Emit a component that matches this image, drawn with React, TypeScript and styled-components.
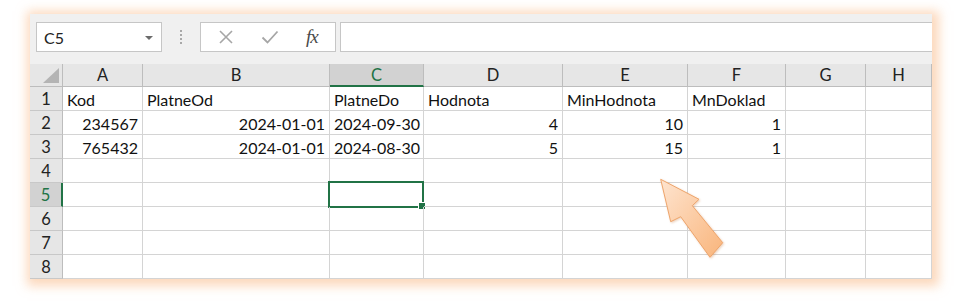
import styled, { createGlobalStyle } from "styled-components";

const GlobalStyle = createGlobalStyle`
  body {
    margin: 0;
    background: #ffffff;
    font-family: Lato, "Open Sans", Arial, sans-serif;
  }
`;

const Frame = styled.div`
  padding: 14px 0 0 30px;
  height: 302px;
  box-sizing: border-box;
`;

const Panel = styled.div`
  position: relative;
  width: 902px;
  background: #ffffff;
  box-shadow: 2px 2px 10px 5px rgba(250, 185, 135, 0.55);
`;

const Toolbar = styled.div`
  height: 50px;
  box-sizing: border-box;
  padding: 8px 0 12px 6px;
  display: flex;
  align-items: stretch;
  background: #f0f0f0;
`;

const NameBox = styled.div`
  width: 126px;
  box-sizing: border-box;
  background: #ffffff;
  border: 1px solid #c6c6c6;
  display: flex;
  align-items: center;
  justify-content: space-between;
  padding: 0 8px 0 7px;
  font-size: 16px;
  color: #222;
`;

const DropCaret = styled.span`
  width: 0;
  height: 0;
  border-left: 4px solid transparent;
  border-right: 4px solid transparent;
  border-top: 4px solid #6b6b6b;
  margin-top: 2px;
`;

const Grip = styled.div`
  width: 38px;
  display: flex;
  flex-direction: column;
  align-items: center;
  justify-content: center;
  gap: 2px;
`;

const GripDot = styled.span`
  width: 2px;
  height: 2px;
  background: #a8a8a8;
`;

const FxGroup = styled.div`
  width: 136px;
  box-sizing: border-box;
  background: #ffffff;
  border: 1px solid #c6c6c6;
  display: flex;
  align-items: center;
  justify-content: space-around;
  padding: 0 4px;
`;

const FxLabel = styled.span`
  font-family: "Liberation Serif", "DejaVu Serif", serif;
  font-style: italic;
  font-size: 19px;
  color: #4a4a4a;
  letter-spacing: -1px;
`;

const FormulaInput = styled.div`
  flex: 1;
  margin-left: 4px;
  background: #ffffff;
  border: 1px solid #c6c6c6;
  border-right: none;
`;

const Sheet = styled.div`
  display: grid;
  grid-template-columns: 33px 80px 187px 94px 139px 125px 98px 80px 66px;
  grid-template-rows: 23px repeat(8, 24px);
`;

const Corner = styled.div`
  background: #e6e6e6;
  border-right: 1px solid #bdbdbd;
  border-bottom: 1px solid #bdbdbd;
  box-sizing: border-box;
  display: flex;
  align-items: flex-end;
  justify-content: flex-end;
  padding: 0 3px 3px 0;
`;

const SelectAll = styled.span`
  width: 0;
  height: 0;
  border-left: 16px solid transparent;
  border-bottom: 15px solid #b4b4b4;
`;

const ColHead = styled.div<{ $active?: boolean }>`
  box-sizing: border-box;
  background: ${(p) => (p.$active ? "#d2d2d2" : "#e6e6e6")};
  border-right: 1px solid #bdbdbd;
  border-bottom: ${(p) => (p.$active ? "2px solid #217346" : "1px solid #bdbdbd")};
  color: ${(p) => (p.$active ? "#217346" : "#222")};
  font-size: 16.5px;
  display: flex;
  align-items: center;
  justify-content: center;
`;

const RowHead = styled.div<{ $active?: boolean }>`
  box-sizing: border-box;
  background: ${(p) => (p.$active ? "#d2d2d2" : "#e6e6e6")};
  border-right: ${(p) => (p.$active ? "2px solid #217346" : "1px solid #bdbdbd")};
  border-bottom: 1px solid #c8c8c8;
  color: ${(p) => (p.$active ? "#217346" : "#222")};
  font-size: 16.5px;
  display: flex;
  align-items: flex-end;
  justify-content: center;
  padding-bottom: 1px;
`;

const Cell = styled.div<{ $num?: boolean }>`
  position: relative;
  box-sizing: border-box;
  border-right: 1px solid #d4d4d4;
  border-bottom: 1px solid #d4d4d4;
  font-size: 16px;
  color: #111;
  white-space: nowrap;
  display: flex;
  align-items: flex-end;
  justify-content: ${(p) => (p.$num ? "flex-end" : "flex-start")};
  padding: 0 4px 1px 4px;
`;

const Selection = styled.div`
  position: absolute;
  inset: -2px -1px -2px -2px;
  border: 2px solid #217346;
`;

const FillHandle = styled.span`
  position: absolute;
  right: -4px;
  bottom: -4px;
  width: 6px;
  height: 6px;
  background: #217346;
  border: 1px solid #ffffff;
`;

const Arrow = styled.svg`
  position: absolute;
  left: 625px;
  top: 160px;
  width: 75px;
  height: 90px;
  filter: drop-shadow(1px 1px 1px rgba(200, 120, 60, 0.35));
`;

const cols = ["A", "B", "C", "D", "E", "F", "G", "H"];

type Val = { t: string; n?: boolean };

const rows: Val[][] = [
  [{ t: "Kod" }, { t: "PlatneOd" }, { t: "PlatneDo" }, { t: "Hodnota" }, { t: "MinHodnota" }, { t: "MnDoklad" }, { t: "" }, { t: "" }],
  [{ t: "234567", n: true }, { t: "2024-01-01", n: true }, { t: "2024-09-30" }, { t: "4", n: true }, { t: "10", n: true }, { t: "1", n: true }, { t: "" }, { t: "" }],
  [{ t: "765432", n: true }, { t: "2024-01-01", n: true }, { t: "2024-08-30" }, { t: "5", n: true }, { t: "15", n: true }, { t: "1", n: true }, { t: "" }, { t: "" }],
];

const App = () => {
  const allRows: Val[][] = [...rows];
  while (allRows.length < 8) allRows.push(cols.map(() => ({ t: "" })));

  return (
    <>
      <GlobalStyle />
      <Frame>
        <Panel>
          <Toolbar>
            <NameBox>
              C5
              <DropCaret />
            </NameBox>
            <Grip>
              <GripDot />
              <GripDot />
              <GripDot />
              <GripDot />
            </Grip>
            <FxGroup>
              <svg width="16" height="16" viewBox="0 0 16 16">
                <path d="M2 2 L14 14 M14 2 L2 14" stroke="#a6a6a6" strokeWidth="1.6" fill="none" />
              </svg>
              <svg width="18" height="16" viewBox="0 0 18 16">
                <path d="M1.5 8.5 L6.5 13.5 L16.5 2.5" stroke="#a6a6a6" strokeWidth="1.8" fill="none" />
              </svg>
              <FxLabel>fx</FxLabel>
            </FxGroup>
            <FormulaInput />
          </Toolbar>
          <Sheet>
            <Corner>
              <SelectAll />
            </Corner>
            {cols.map((c) => (
              <ColHead key={c} $active={c === "C"}>
                {c}
              </ColHead>
            ))}
            {allRows.map((r, i) => [
              <RowHead key={`h${i}`} $active={i === 4}>
                {i + 1}
              </RowHead>,
              ...r.map((v, j) => (
                <Cell key={`${i}-${j}`} $num={v.n}>
                  {v.t}
                  {i === 4 && j === 2 && (
                    <Selection>
                      <FillHandle />
                    </Selection>
                  )}
                </Cell>
              )),
            ])}
          </Sheet>
          <Arrow viewBox="0 0 75 90">
            <defs>
              <linearGradient id="arrowFill" x1="0" y1="0" x2="1" y2="1">
                <stop offset="0" stopColor="#fee4cf" />
                <stop offset="1" stopColor="#f9b57c" />
              </linearGradient>
            </defs>
            <polygon
              points="5.7,5.3 44,25.3 37.3,31.7 67.7,68.7 55,83.3 25.7,42.7 15.7,47.7"
              fill="url(#arrowFill)"
              stroke="#eea56c"
              strokeWidth="1"
              strokeLinejoin="round"
            />
          </Arrow>
        </Panel>
      </Frame>
    </>
  );
};

export default App;
